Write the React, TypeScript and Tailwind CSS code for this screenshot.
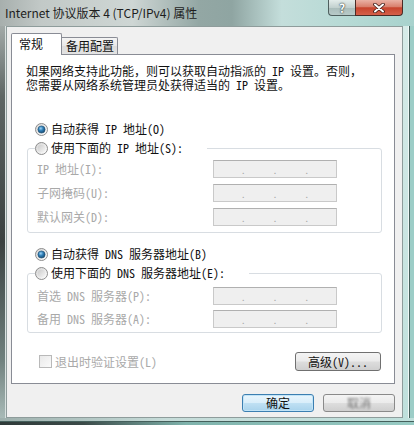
import React from "react";

const F = "font-['Noto_Sans_Mono_CJK_SC','Noto_Sans_CJK_SC',sans-serif]";
const FP = "font-['Noto_Sans_CJK_SC','Noto_Sans',sans-serif]";

function Radio({ checked, id }: { checked: boolean; id: string }) {
  return (
    <svg width="13" height="13" viewBox="0 0 13 13" className="shrink-0">
      <defs>
        <linearGradient id={`bg-${id}`} x1="0" y1="0" x2="1" y2="1">
          <stop offset="0" stopColor="#d4d4d4" />
          <stop offset="1" stopColor="#ffffff" />
        </linearGradient>
        <radialGradient id={`dot-${id}`} cx="0.4" cy="0.35" r="0.7">
          <stop offset="0" stopColor="#9fd4f5" />
          <stop offset="0.45" stopColor="#2f7fb8" />
          <stop offset="1" stopColor="#16466a" />
        </radialGradient>
        <linearGradient id={`in-${id}`} x1="0" y1="0" x2="1" y2="1">
          <stop offset="0" stopColor="#cbcbcb" />
          <stop offset="1" stopColor="#f6f6f6" />
        </linearGradient>
      </defs>
      <circle cx="6.5" cy="6.5" r="6" fill={`url(#bg-${id})`} stroke="#8d8d8d" strokeWidth="1" />
      {checked ? (
        <circle cx="6.5" cy="6.5" r="3.6" fill={`url(#dot-${id})`} stroke="#1d4d70" strokeWidth="0.6" />
      ) : (
        <circle cx="6.5" cy="6.5" r="3.8" fill={`url(#in-${id})`} />
      )}
    </svg>
  );
}

function IpBox() {
  return (
    <div className="w-[124px] h-[18px] border border-[#c9c9c9] border-t-[#b0b0b0] bg-[#efefef] flex items-end pb-[2px] text-[10px] leading-[10px] text-[#a6a6a6]">
      <span className="flex-1" />
      <span>.</span>
      <span className="flex-1" />
      <span>.</span>
      <span className="flex-1" />
      <span>.</span>
      <span className="flex-1" />
    </div>
  );
}

function Row({ label }: { label: string }) {
  return (
    <div className="h-[18px] flex items-center pl-[9px]">
      <span className="w-[176px] text-[#a9a9a9]">{label}</span>
      <IpBox />
    </div>
  );
}

export default function App() {
  return (
    <div className={`w-[414px] h-[425px] overflow-hidden flex flex-col text-[12px] leading-[14px] text-[#111] ${F}`}>
      {/* title bar */}
      <div className="h-[26px] shrink-0 flex items-start justify-between bg-[linear-gradient(90deg,#a7afad_0%,#c2c9c7_10%,#ced6d4_32%,#93a7a4_48%,#8fa5a2_56%,#c4dedb_68%,#b5d9d4_85%,#a8d2cd_100%)]">
        <div className={`pl-[5px] pt-[5px] text-[12px] leading-[16px] text-[#1d1d1d] ${FP}`}>
          Internet 协议版本 4 (TCP/IPv4) 属性
        </div>
        <div className="flex pr-[11px]">
          <div className="w-[27px] h-[16px] border border-t-0 border-r-0 border-[#4f5f5e] rounded-bl-[4px] bg-[linear-gradient(180deg,#e3ecea_0%,#c2d1cf_50%,#a9bcba_51%,#b8cac8_100%)] flex items-center justify-center">
            <span className={`text-[12px] leading-[12px] font-bold text-white [text-shadow:0_0_2px_#2c3b3a,0_0_1px_#2c3b3a] ${FP}`}>?</span>
          </div>
          <div className="w-[48px] h-[16px] border border-t-0 border-[#4a2b26] rounded-br-[4px] bg-[linear-gradient(180deg,#eab2a5_0%,#d9806d_45%,#c7442d_52%,#d5604a_100%)] flex items-center justify-center">
            <svg width="14" height="10" viewBox="0 0 14 10">
              <path d="M3 1.5 L11 8.5 M11 1.5 L3 8.5" stroke="#3a1a15" strokeWidth="3.6" strokeLinecap="round" />
              <path d="M3 1.5 L11 8.5 M11 1.5 L3 8.5" stroke="#ffffff" strokeWidth="2" strokeLinecap="round" />
            </svg>
          </div>
        </div>
      </div>

      {/* middle */}
      <div className="flex h-[392px] shrink-0">
        <div className="w-[6px] bg-[linear-gradient(180deg,#a2aaa8_0%,#5e6664_18%,#3b4140_55%,#6f807d_85%,#a8bab7_100%)] border-r border-[#d9e1e0]" />
        <div className="w-[397px] h-[392px] border border-[#8e9c9b] bg-[#f0f0f0] flex flex-col pt-[6px] pl-[4px] pr-[7px]">
          {/* tabs */}
          <div className="flex items-end -mb-px relative z-10 h-[22px]">
            <div className={`w-[51px] h-[22px] bg-white border border-b-0 border-[#898c95] rounded-t-[2px] pl-[7px] pt-[3px] text-[12px] leading-[14px] text-[#111] ${FP}`}>
              常规
            </div>
            <div className={`w-[56px] h-[17px] mb-px border border-l-0 border-b-0 border-[#898c95] rounded-tr-[2px] bg-[linear-gradient(180deg,#f4f4f4_0%,#e8e8e8_50%,#dcdcdc_51%,#e3e3e3_100%)] pl-[4px] pt-[1px] text-[12px] leading-[14px] text-[#111] ${FP}`}>
              备用配置
            </div>
          </div>

          {/* panel */}
          <div className="w-[384px] h-[330px] border border-[#898c95] bg-white flex flex-col">
            <div className="mt-[9px] ml-[14px] leading-[14px]">
              <div>如果网络支持此功能，则可以获取自动指派的 IP 设置。否则，</div>
              <div>您需要从网络系统管理员处获得适当的 IP 设置。</div>
            </div>

            <div className="mt-[29px] ml-[23px] h-[16px] flex items-center gap-[3px]">
              <Radio checked id="r1" />
              <span>自动获得 IP 地址(O)</span>
            </div>

            <fieldset className="mt-[3px] ml-[15px] w-[355px] border border-[#d8dde2] rounded-[3px] pb-[6px]">
              <legend className="ml-[7px] pr-[24px] h-[16px] flex items-center gap-[3px]">
                <Radio checked={false} id="r2" />
                <span>使用下面的 IP 地址(S):</span>
              </legend>
              <div className="pt-[4px] flex flex-col gap-[6px]">
                <Row label="IP 地址(I):" />
                <Row label="子网掩码(U):" />
                <Row label="默认网关(D):" />
              </div>
            </fieldset>

            <div className="mt-[13px] ml-[23px] h-[16px] flex items-center gap-[3px]">
              <Radio checked id="r3" />
              <span>自动获得 DNS 服务器地址(B)</span>
            </div>

            <fieldset className="mt-[3px] ml-[15px] w-[355px] border border-[#d8dde2] rounded-[3px] pb-[4px]">
              <legend className="ml-[7px] pr-[24px] h-[16px] flex items-center gap-[3px]">
                <Radio checked={false} id="r4" />
                <span>使用下面的 DNS 服务器地址(E):</span>
              </legend>
              <div className="pt-[6px] flex flex-col gap-[5px]">
                <Row label="首选 DNS 服务器(P):" />
                <Row label="备用 DNS 服务器(A):" />
              </div>
            </fieldset>

            <div className="mt-[19px] h-[19px] flex items-center justify-between pl-[27px] pr-[13px]">
              <div className="flex items-center gap-[3px]">
                <div className="w-[13px] h-[13px] border border-[#b9b9b9] bg-[linear-gradient(135deg,#e9e9e9,#fafafa)]" />
                <span className="text-[#a9a9a9]">退出时验证设置(L)</span>
              </div>
              <div className="w-[86px] h-[19px] border border-[#707070] rounded-[3px] bg-[linear-gradient(180deg,#f4f4f4_0%,#ebebeb_48%,#dddddd_52%,#cfcfcf_100%)] flex items-center justify-center">
                高级(V)...
              </div>
            </div>
          </div>

          {/* bottom buttons */}
          <div className="mt-[10px] flex justify-end gap-[9px]">
            <div className={`w-[72px] h-[18px] border border-[#3c7fb1] rounded-[3px] bg-[linear-gradient(180deg,#eaf6fd_0%,#d9eefa_48%,#bfe0f3_52%,#a9d3ec_100%)] shadow-[inset_0_0_0_1px_#c2e4f7] flex items-center justify-center ${FP}`}>
              确定
            </div>
            <div className={`w-[72px] h-[18px] border border-[#8a8a8a] rounded-[3px] bg-[linear-gradient(180deg,#f4f4f4_0%,#ebebeb_48%,#dddddd_52%,#cfcfcf_100%)] flex items-center justify-center text-[#777] ${FP}`}>
              <span className="blur-[0.8px]">取消</span>
            </div>
          </div>
        </div>
        <div className="w-[11px] flex">
          <div className="w-[5px] bg-[linear-gradient(180deg,#d6ebe8,#bfe0dc)]" />
          <div className="w-px bg-[#eef7f6]" />
          <div className="w-px bg-[#45605c]" />
          <div className="w-[4px] bg-[#9ccdc7]" />
        </div>
      </div>

      {/* bottom frame */}
      <div className="flex-1 flex flex-col">
        <div className="h-[3px] bg-[linear-gradient(90deg,#9eb0ad_0%,#c6dcd9_40%,#bfe0dc_100%)]" />
        <div className="h-px bg-[#45605c]" />
        <div className="flex-1 bg-[linear-gradient(90deg,#2f3a39_0%,#3b4a48_20%,#7fb3ac_45%,#98cbc4_100%)]" />
      </div>
    </div>
  );
}
